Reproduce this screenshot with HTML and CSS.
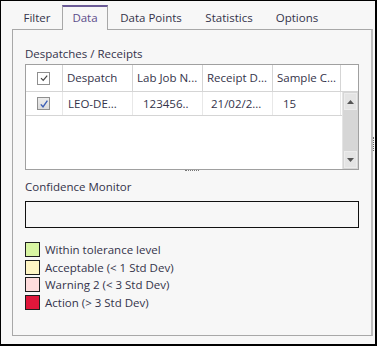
FILE: index.html
```html
<!DOCTYPE html>
<html lang="en">
<head>
    <meta charset="UTF-8">
    <title>Data</title>
    <link rel="stylesheet" href="styles.css">
</head>
<body>
    <div class="window">
        <div class="tabs">
            <div class="tab t-filter">Filter</div>
            <div class="tab t-data active">Data</div>
            <div class="tab t-points">Data Points</div>
            <div class="tab t-stats">Statistics</div>
            <div class="tab t-options">Options</div>
        </div>

        <div class="panel">
            <div class="label">Despatches / Receipts</div>

            <div class="grid">
                <div class="head-row">
                    <div class="cell check-cell">
                        <span class="check">
                            <svg width="10" height="10" viewBox="0 0 10 10"><path d="M2 5.2 L4.2 7.4 L8.2 2.6" fill="none" stroke="#444" stroke-width="1.2"/></svg>
                        </span>
                    </div>
                    <div class="cell c-desp">Despatch</div>
                    <div class="cell c-lab">Lab Job N...</div>
                    <div class="cell c-rec">Receipt D...</div>
                    <div class="cell c-samp">Sample C...</div>
                    <div class="cell c-scroll"></div>
                </div>
                <div class="body">
                    <div class="rows">
                        <div class="row">
                            <div class="cell check-cell">
                                <span class="check checked">
                                    <svg width="10" height="10" viewBox="0 0 10 10"><path d="M1.8 5.4 L4 7.8 L8.4 1.6" fill="none" stroke="#3d5fb5" stroke-width="1.4"/></svg>
                                </span>
                            </div>
                            <div class="cell c-desp d1">LEO-DE...</div>
                            <div class="cell c-lab d2">123456..</div>
                            <div class="cell c-rec d3">21/02/2...</div>
                            <div class="cell c-samp d4">15</div>
                        </div>
                    </div>
                    <div class="scrollbar">
                        <div class="sb-btn">
                            <svg width="7" height="4" viewBox="0 0 7 4"><path d="M0 4 L3.5 0 L7 4 Z" fill="#555"/></svg>
                        </div>
                        <div class="sb-btn">
                            <svg width="7" height="4" viewBox="0 0 7 4"><path d="M0 0 L7 0 L3.5 4 Z" fill="#555"/></svg>
                        </div>
                    </div>
                </div>
            </div>
            <div class="splitter"></div>

            <div class="label monitor-label">Confidence Monitor</div>
            <div class="monitor"></div>

            <div class="legend">
                <div class="legend-item"><span class="swatch green"></span>Within tolerance level</div>
                <div class="legend-item"><span class="swatch yellow"></span>Acceptable (&lt; 1 Std Dev)</div>
                <div class="legend-item"><span class="swatch pink"></span>Warning 2 (&lt; 3 Std Dev)</div>
                <div class="legend-item"><span class="swatch red"></span>Action (&gt; 3 Std Dev)</div>
            </div>
        </div>

        <div class="grip"></div>
    </div>
</body>
</html>
```

FILE: styles.css
```css
body, html {
    margin: 0;
    padding: 0;
}

body {
    font-family: "Open Sans", "Noto Sans", sans-serif;
    font-size: 11.5px;
    color: #34334a;
}

.window {
    position: relative;
    box-sizing: border-box;
    width: 377px;
    height: 346px;
    background-color: #f7f7f7;
    border-top: 1px solid #000;
    border-left: 1px solid #000;
    border-right: 2px solid #000;
    border-bottom: 2px solid #000;
    padding: 4px 2px 8px 11px;
    display: flex;
    flex-direction: column;
}

/* tab strip */
.tabs {
    display: flex;
    height: 24px;
}

.tab {
    box-sizing: border-box;
    padding-top: 2px;
    line-height: 21px;
    text-align: center;
    white-space: nowrap;
}

.t-filter { width: 50px; }
.t-data { width: 46px; }
.t-points { width: 86px; }
.t-stats { width: 70px; }
.t-options { width: 66px; }

.tab.active {
    color: #5b4c8a;
    border-top: 2px solid #6a5a96;
    border-left: 1px solid #a8a8a8;
    border-right: 1px solid #a8a8a8;
    padding-top: 0;
    background-color: #f7f7f7;
    height: 25px;
    position: relative;
    z-index: 1;
}

/* main panel */
.panel {
    flex: 1;
    border: 1px solid #a8a8a8;
    border-right: 2px solid #bdbdbd;
    padding: 14px 12px 0 12px;
    display: flex;
    flex-direction: column;
}

.label {
    line-height: 19px;
    height: 16px;
    margin-bottom: 4px;
}

/* data grid */
.grid {
    border: 1px solid #a0a0a0;
    background-color: #fff;
    height: 104px;
    display: flex;
    flex-direction: column;
}

.head-row, .row {
    display: flex;
}

.head-row {
    height: 26px;
    border-bottom: 1px solid #d5d5d5;
}

.cell {
    box-sizing: border-box;
    border-right: 1px solid #d5d5d5;
    line-height: 26px;
    padding-left: 4px;
    white-space: nowrap;
    overflow: hidden;
}

.check-cell {
    width: 37px;
    padding: 0 0 0 11px;
    display: flex;
    align-items: center;
}

.c-desp { width: 70px; }
.c-lab { width: 70px; }
.c-rec { width: 70px; }
.c-samp { width: 68px; }
.c-scroll { flex: 1; border-right: none; }

.check {
    box-sizing: border-box;
    width: 13px;
    height: 13px;
    border: 1px solid #8f8f8f;
    background-color: #fff;
    display: flex;
    align-items: center;
    justify-content: center;
}

.check.checked {
    background: linear-gradient(#ececec, #dcdcdc);
}

.body {
    flex: 1;
    display: flex;
}

.rows {
    flex: 1;
}

.row {
    height: 23px;
    border-bottom: 1px solid #d5d5d5;
}

.row .cell {
    line-height: 23px;
    border-right-color: #e8e8e8;
}

.d1 { padding-left: 5px; }
.d2 { padding-left: 10px; }
.d3 { padding-left: 8px; }
.d4 { padding-left: 10px; }

.scrollbar {
    width: 16px;
    background-color: #d6d6d6;
    border-left: 1px solid #e4e4e4;
    display: flex;
    flex-direction: column;
    justify-content: space-between;
    padding: 1px 0 1px 0;
    box-sizing: border-box;
}

.sb-btn {
    height: 15px;
    margin: 0 1px;
    background-color: #e4e4e4;
    border: 1px solid #ececec;
    display: flex;
    align-items: center;
    justify-content: center;
}

.splitter {
    width: 14px;
    height: 0;
    border-top: 1px dotted #777;
    align-self: center;
    margin: 0 0 6px 0;
}

.monitor-label {
    margin-bottom: 8px;
}

.monitor {
    height: 25px;
    border: 1px solid #111;
}

/* legend */
.legend {
    margin-top: 14px;
    display: flex;
    flex-direction: column;
    gap: 2.7px;
}

.legend-item {
    display: flex;
    align-items: center;
    height: 15px;
    line-height: 15px;
}

.swatch {
    box-sizing: border-box;
    width: 15px;
    height: 15px;
    border: 1px solid #1e1e1e;
    margin-right: 5px;
}

.green { background-color: #d8f5a2; }
.yellow { background-color: #fff5c4; }
.pink { background-color: #ffdcdc; }
.red { background-color: #e0173b; }

/* resize grip on the right edge */
.grip {
    position: absolute;
    left: 372px;
    top: 136px;
    width: 0;
    height: 14px;
    border-left: 1px dotted #666;
}
```
